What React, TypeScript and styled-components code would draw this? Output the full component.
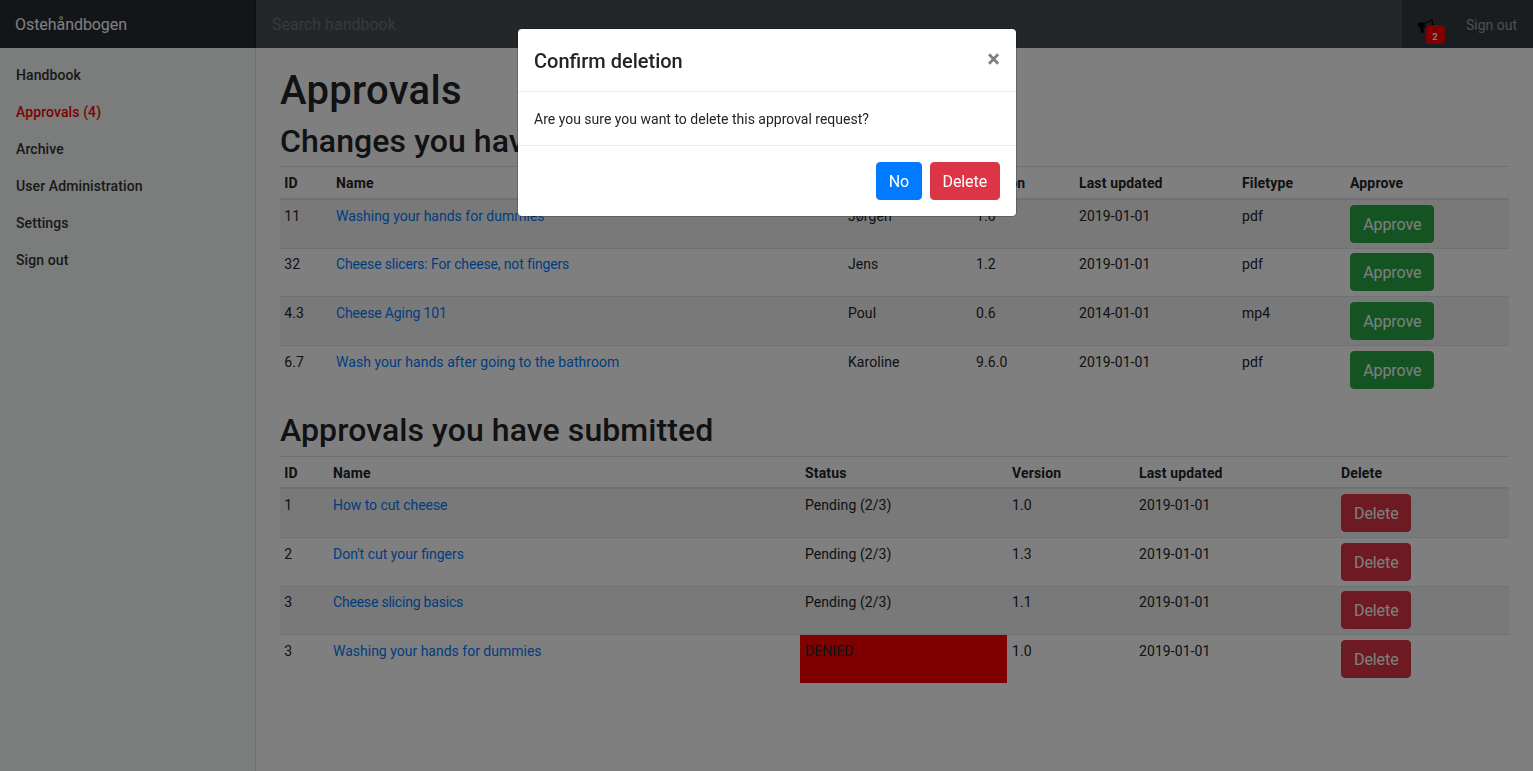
import React from "react";
import styled, { createGlobalStyle, css } from "styled-components";

const GlobalStyle = createGlobalStyle`
  *, *::before, *::after { box-sizing: border-box; }
  html, body { margin: 0; height: 100%; }
  #root { height: 100%; }
  body {
    font-family: Roboto, "Liberation Sans", sans-serif;
    font-size: 14px;
    line-height: 1.5;
    color: #212529;
    background: #fff;
    overflow: hidden;
  }
`;

const Page = styled.div`
  display: flex;
  flex-direction: column;
  height: 100vh;
`;

const Navbar = styled.header`
  display: flex;
  align-items: stretch;
  height: 48px;
  flex: none;
  background: #343a40;
`;

const Brand = styled.a`
  width: 16.666667%;
  flex: none;
  padding: 13px 15px 11px;
  font-size: 16px;
  letter-spacing: -0.06px;
  color: #fff;
  background: rgba(0, 0, 0, 0.25);
  box-shadow: inset -1px 0 0 rgba(0, 0, 0, 0.25);
`;

const Search = styled.input`
  flex: 1;
  min-width: 0;
  padding: 13px 16px 11px 16.5px;
  border: 0;
  border-radius: 0;
  font: inherit;
  font-size: 16px;
  color: #fff;
  background: rgba(255, 255, 255, 0.1);
  &::placeholder {
    color: #6c757d;
    opacity: 1;
  }
`;

const NavActions = styled.nav`
  display: flex;
  align-items: center;
  justify-content: space-between;
  width: 131px;
  flex: none;
  padding: 0 16px;
`;

const Notifications = styled.a`
  position: relative;
  display: flex;
  padding-top: 3px;
  color: #000;
`;

const Badge = styled.span`
  position: absolute;
  left: 8px;
  top: 10.5px;
  width: 19px;
  height: 19px;
  padding: 3px 1px 0 0;
  border-radius: 4px;
  font-size: 9.5px;
  font-weight: 700;
  line-height: 18px;
  text-align: center;
  color: #fff;
  background: red;
`;

const NavText = styled.a`
  color: rgba(255, 255, 255, 0.5);
  padding-top: 2px;
`;

const Body = styled.div`
  display: flex;
  flex: 1;
  min-height: 0;
`;

const Sidebar = styled.nav`
  width: 16.666667%;
  flex: none;
  padding-top: 8px;
  background: #f5faf8;
  box-shadow: inset -1px 0 0 rgba(0, 0, 0, 0.1);
`;

const SideLink = styled.a<{ $active?: boolean }>`
  display: block;
  padding: 9px 16px 7px;
  font-weight: 500;
  letter-spacing: 0.1px;
  color: ${(p) => (p.$active ? "red" : "#333")};
`;

const Main = styled.main`
  flex: 1;
  min-width: 0;
  padding: 16px 24px 0;
`;

const PageTitle = styled.h1`
  margin: 0 0 5px;
  padding: 3px 0 0 0.5px;
  font-size: 40px;
  font-weight: 500;
  line-height: 1.2;
  letter-spacing: 0.3px;
`;

const SectionTitle = styled.h2`
  margin: 0 0 6px;
  padding: 2px 0 0 0.5px;
  font-size: 32px;
  font-weight: 500;
  line-height: 1.2;
  letter-spacing: 0.09px;
`;

const Table = styled.table`
  width: 100%;
  margin-bottom: 16px;
  table-layout: fixed;
  border-collapse: collapse;
  tbody tr:nth-of-type(odd) {
    background: rgba(0, 0, 0, 0.05);
  }
`;

const Col = styled.col<{ $w: number }>`
  width: ${(p) => p.$w}px;
`;

const cell = css`
  padding: 5.8px 4.8px 3.8px;
  text-align: left;
  border-top: 1px solid #dee2e6;
`;

const Th = styled.th`
  ${cell}
  vertical-align: bottom;
  font-weight: 700;
  letter-spacing: 0.16px;
  border-bottom: 2px solid #dee2e6;
`;

const Td = styled.td<{ $denied?: boolean }>`
  ${cell}
  vertical-align: top;
  letter-spacing: 0.08px;
  ${(p) => p.$denied && "background: red;"}
`;

const ActionTd = styled.td`
  ${cell}
  padding: 4.8px;
`;

const Link = styled.a<{ $track: number }>`
  color: #007bff;
  letter-spacing: ${(p) => p.$track}px;
`;

const tones = { primary: "#007bff", danger: "#dc3545", success: "#28a745" };

const Button = styled.button<{ $tone: keyof typeof tones; $width: number }>`
  display: inline-block;
  width: ${(p) => p.$width}px;
  margin: 0;
  padding: 7px 0 5px 0.6px;
  border: 1px solid ${(p) => tones[p.$tone]};
  border-radius: 4px;
  font-family: inherit;
  font-size: 16px;
  line-height: 1.5;
  letter-spacing: -0.1px;
  text-align: center;
  vertical-align: middle;
  color: #fff;
  background: ${(p) => tones[p.$tone]};
`;

const Backdrop = styled.div`
  position: fixed;
  inset: 0;
  background: rgba(0, 0, 0, 0.5);
`;

const Dialog = styled.div`
  width: 500px;
  margin: 28px auto;
  border: 1px solid rgba(0, 0, 0, 0.2);
  border-radius: 4.8px;
  background: #fff;
  background-clip: padding-box;
`;

const DialogHeader = styled.div`
  display: flex;
  align-items: flex-start;
  justify-content: space-between;
  padding: 16px 16px 16px 16.5px;
  border-bottom: 1px solid #e9ecef;
`;

const DialogTitle = styled.h5`
  margin: 1px 0 -1px;
  font-size: 20px;
  font-weight: 500;
  line-height: 1.5;
`;

const Close = styled.button`
  margin: -16px -16px -16px auto;
  padding: 18px 15.5px 14px;
  border: 0;
  font-family: inherit;
  font-size: 24px;
  font-weight: 700;
  line-height: 1;
  color: #000;
  background: transparent;
  opacity: 0.5;
`;

const DialogBody = styled.div`
  padding: 17px 16px 15px 16.5px;
`;

const DialogFooter = styled.div`
  display: flex;
  justify-content: flex-end;
  gap: 8px;
  padding: 16px;
  border-top: 1px solid #e9ecef;
`;

const menu = ["Handbook", "Approvals (4)", "Archive", "User Administration", "Settings", "Sign out"];

const pending = [
  ["11", "Washing your hands for dummies", "Jørgen", "1.0", "2019-01-01", "pdf"],
  ["32", "Cheese slicers: For cheese, not fingers", "Jens", "1.2", "2019-01-01", "pdf"],
  ["4.3", "Cheese Aging 101", "Poul", "0.6", "2014-01-01", "mp4"],
  ["6.7", "Wash your hands after going to the bathroom", "Karoline", "9.6.0", "2019-01-01", "pdf"],
];

const submitted = [
  ["1", "How to cut cheese", "Pending (2/3)", "1.0", "2019-01-01"],
  ["2", "Don't cut your fingers", "Pending (2/3)", "1.3", "2019-01-01"],
  ["3", "Cheese slicing basics", "Pending (2/3)", "1.1", "2019-01-01"],
  ["3", "Washing your hands for dummies", "DENIED", "1.0", "2019-01-01"],
];

const tracking: Record<string, number> = {
  "Cheese slicers: For cheese, not fingers": -0.15,
  "Cheese Aging 101": -0.13,
  "Wash your hands after going to the bathroom": 0.055,
  "How to cut cheese": -0.06,
  "Cheese slicing basics": -0.2,
};

type GridProps = {
  heads: string[];
  widths: number[];
  rows: string[][];
  action: string;
  actionWidth: number;
  tone: keyof typeof tones;
};

function RequestTable({ heads, widths, rows, action, actionWidth, tone }: GridProps) {
  return (
    <Table>
      <colgroup>
        {widths.map((w, i) => (
          <Col key={i} $w={w} />
        ))}
      </colgroup>
      <thead>
        <tr>
          {heads.map((h) => (
            <Th key={h}>{h}</Th>
          ))}
        </tr>
      </thead>
      <tbody>
        {rows.map((row, r) => (
          <tr key={r}>
            {row.map((text, i) => (
              <Td key={i} $denied={text === "DENIED"}>
                {i === 1 ? <Link $track={tracking[text] ?? 0}>{text}</Link> : text}
              </Td>
            ))}
            <ActionTd>
              <Button $tone={tone} $width={actionWidth}>
                {action}
              </Button>
            </ActionTd>
          </tr>
        ))}
      </tbody>
    </Table>
  );
}

const Bullhorn = () => (
  <svg width="16" height="16" viewBox="0 0 1792 1792" fill="currentColor">
    <path d="M1664 640q53 0 90.500 37.500t37.500 90.500-37.500 90.500-90.500 37.500v384q0 52-38 90t-90 38q-417-347-812-380-58 19-91 66t-31 100.500 40 92.500q-20 33-23 65.500t6 58 33.500 55 48 50 61.500 50.500q-29 58-111.500 83t-168.500 11.500-132-55.500q-7-23-29.500-87.500t-32-94.500-23-89-15-101 3.500-98.500 22-110.500h-122q-66 0-113-47t-47-113v-192q0-66 47-113t113-47h480q435 0 896-384 52 0 90 38t38 90v384zm-128 604v-954q-394 302-768 343v270q377 42 768 341z" />
  </svg>
);

export default function App() {
  return (
    <>
      <GlobalStyle />
      <Page>
        <Navbar>
          <Brand>Ostehåndbogen</Brand>
          <Search placeholder="Search handbook" />
          <NavActions>
            <Notifications>
              <Bullhorn />
              <Badge>2</Badge>
            </Notifications>
            <NavText>Sign out</NavText>
          </NavActions>
        </Navbar>
        <Body>
          <Sidebar>
            {menu.map((m) => (
              <SideLink key={m} $active={m.startsWith("Approvals")}>
                {m}
              </SideLink>
            ))}
          </Sidebar>
          <Main>
            <PageTitle>Approvals</PageTitle>
            <SectionTitle>Changes you have to approve</SectionTitle>
            <RequestTable
              heads={["ID", "Name", "Author", "Version", "Last updated", "Filetype", "Approve"]}
              widths={[51.7, 512, 128, 103, 163, 108, 163.8]}
              rows={pending}
              action="Approve"
              actionWidth={84}
              tone="success"
            />
            <SectionTitle>Approvals you have submitted</SectionTitle>
            <RequestTable
              heads={["ID", "Name", "Status", "Version", "Last updated", "Delete"]}
              widths={[48.7, 472, 207, 127, 202, 172.8]}
              rows={submitted}
              action="Delete"
              actionWidth={70}
              tone="danger"
            />
          </Main>
        </Body>
      </Page>
      <Backdrop>
        <Dialog role="dialog">
          <DialogHeader>
            <DialogTitle>Confirm deletion</DialogTitle>
            <Close>×</Close>
          </DialogHeader>
          <DialogBody>Are you sure you want to delete this approval request?</DialogBody>
          <DialogFooter>
            <Button $tone="primary" $width={46}>
              No
            </Button>
            <Button $tone="danger" $width={70}>
              Delete
            </Button>
          </DialogFooter>
        </Dialog>
      </Backdrop>
    </>
  );
}
